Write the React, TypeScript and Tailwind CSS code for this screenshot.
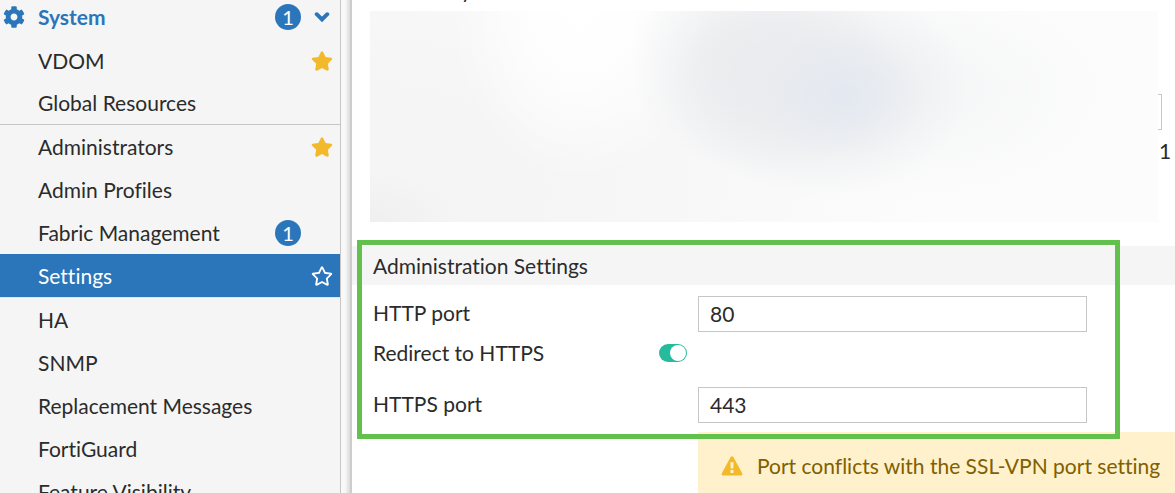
import { useState } from "react";
import { FaCog, FaRegStar, FaStar } from "react-icons/fa";

type NavItem = {
  label: string;
  badge?: number;
  starred?: boolean;
  divider?: boolean;
};

const navItems: NavItem[] = [
  { label: "VDOM", starred: true },
  { label: "Global Resources", divider: true },
  { label: "Administrators", starred: true },
  { label: "Admin Profiles" },
  { label: "Fabric Management", badge: 1 },
  { label: "Settings" },
  { label: "HA" },
  { label: "SNMP" },
  { label: "Replacement Messages" },
  { label: "FortiGuard" },
  { label: "Feature Visibility" },
];

function Badge({ count }: { count: number }) {
  return (
    <span className="flex size-[26px] items-center justify-center rounded-full bg-[#2b75ba] text-xl font-normal text-white">
      {count}
    </span>
  );
}

function ChevronIcon() {
  return (
    <svg viewBox="0 0 16 12" className="mr-[3px] ml-[13px] h-3 w-4" fill="none" stroke="currentColor" strokeWidth="3.9" strokeLinecap="round" strokeLinejoin="miter">
      <path d="M2.7 3.2 L8 8.4 L13.3 3.2" />
    </svg>
  );
}

function WarningIcon() {
  return (
    <svg viewBox="0 0 22 20" className="mr-[14px] h-5 w-[22px] shrink-0">
      <path d="M9.6 1.1 Q11 -0.7 12.4 1.1 L21.3 17.4 Q22 19.4 20.1 19.6 H1.9 Q0 19.4 0.7 17.4 Z" fill="#f2b92b" />
      <path d="M9.4 6.3 H12.6 L12.3 12.6 H9.7 Z M9.5 14 H12.5 V16.9 H9.5 Z" fill="#fef1cb" />
    </svg>
  );
}

function Sidebar() {
  const [active, setActive] = useState("Settings");

  return (
    <nav className="w-[341px] shrink-0 border-r border-[#c6c6c6] bg-[#f5f5f5]">
      <button type="button" className="flex h-[39px] w-full items-center pr-[7px] pb-1.5 pl-[3px] font-bold text-[#2b75ba]">
        <FaCog className="mr-[13px] size-[22px]" />
        <span className="flex-1 text-left">System</span>
        <Badge count={1} />
        <ChevronIcon />
      </button>
      <ul>
        {navItems.map((item) => {
          const isActive = item.label === active;
          return (
            <li key={item.label} className={isActive ? "border-b border-[#dce6f0]" : ""}>
              <a
                href="#"
                onClick={(e) => {
                  e.preventDefault();
                  setActive(item.label);
                }}
                className={`flex h-[43px] items-center pr-[7px] pl-[38px] ${item.divider ? "border-b border-[#c6c6c6]" : ""} ${isActive ? "bg-[#2b75ba] text-white" : "text-[#2b2b2b]"}`}
              >
                <span className="flex-1">{item.label}</span>
                {item.badge && (
                  <span className="mr-8">
                    <Badge count={item.badge} />
                  </span>
                )}
                {item.starred && <FaStar className="size-[22px] text-[#f2b92b]" />}
                {isActive && <FaRegStar className="size-[22px]" />}
              </a>
            </li>
          );
        })}
      </ul>
    </nav>
  );
}

function PortField({ id, label, value, onChange }: { id: string; label: string; value: string; onChange: (v: string) => void }) {
  return (
    <div className="flex items-center">
      <label htmlFor={id} className="w-[325px] shrink-0 pb-0.5">
        {label}
      </label>
      <input
        id={id}
        type="text"
        value={value}
        onChange={(e) => onChange(e.target.value)}
        className="h-9 w-[389px] border border-[#c6c6c6] bg-white px-[11px] pb-0.5 outline-none"
      />
    </div>
  );
}

export default function App() {
  const [httpPort, setHttpPort] = useState("80");
  const [httpsPort, setHttpsPort] = useState("443");
  const [redirect, setRedirect] = useState(true);

  return (
    <div className="flex h-screen overflow-hidden bg-white font-['Lato',sans-serif] text-[21px] leading-7 text-[#2b2b2b] [font-variant-ligatures:none]">
      <Sidebar />
      <div className="w-[11px] shrink-0 border-r-2 border-[#cdcdcd] bg-linear-to-r from-[#f8f8f8] from-45% to-[#dadada]" />

      <main className="min-w-0 flex-1">
        <div className="h-[11px] overflow-hidden pl-[109px]">
          <p className="-mt-6">y</p>
        </div>

        {/* redacted block */}
        <div className="flex pl-[18px]">
          <div className="h-[211px] flex-1 bg-[#fcfcfc] bg-[radial-gradient(ellipse_80px_65px_at_475px_84px,#e3e8f1_0%,#e3e8f188_35%,#e3e8f100_100%),radial-gradient(ellipse_150px_110px_at_450px_76px,#e9ebee_0%,#e9ebeebb_40%,#e9ebee00_100%),radial-gradient(ellipse_130px_110px_at_390px_55px,#e9ebee_0%,#e9ebeebb_40%,#e9ebee00_100%),radial-gradient(ellipse_200px_110px_at_540px_80px,#f4f5f6_0%,#f4f5f600_100%),radial-gradient(ellipse_130px_170px_at_210px_0px,#ffffff_0%,#ffffffcc_40%,#ffffff00_100%),radial-gradient(ellipse_90px_50px_at_0px_211px,#efeff0_0%,#efeff000_100%),radial-gradient(ellipse_560px_340px_at_0px_180px,#f5f5f5_0%,#f5f5f5_30%,#f5f5f500_100%)]" />
          <div className="w-[17px] shrink-0">
            <div className="mt-[83px] h-9 w-1 border-y border-r border-[#c6c6c6]" />
            <p className="mt-[7px] pl-px">1</p>
          </div>
        </div>

        <section className="relative mt-6">
          <h2 className="flex h-[39px] items-center bg-[#f5f5f5] pl-[21px]">Administration Settings</h2>
          <div className="pt-[11px] pl-[21px]">
            <PortField id="http-port" label="HTTP port" value={httpPort} onChange={setHttpPort} />
            <div className="my-[7px] flex items-center">
              <label htmlFor="redirect" className="w-[286px] shrink-0">
                Redirect to HTTPS
              </label>
              <input
                id="redirect"
                type="checkbox"
                role="switch"
                checked={redirect}
                onChange={(e) => setRedirect(e.target.checked)}
                className="flex h-[18px] w-7 appearance-none items-center rounded-full bg-gray-400 px-px before:size-4 before:rounded-full before:bg-white checked:justify-end checked:bg-[#27bb9d]"
              />
            </div>
            <div className="pt-[13px]">
              <PortField id="https-port" label="HTTPS port" value={httpsPort} onChange={setHttpsPort} />
            </div>
            <div className="mt-[9px] ml-[325px] flex h-[68px] items-center bg-[#fef1cb] pl-[23px] whitespace-nowrap text-[#806000]">
              <WarningIcon />
              Port conflicts with the SSL-VPN port setting
            </div>
          </div>

          {/* highlight frame over the port fields */}
          <div className="pointer-events-none absolute -top-1.5 left-[5px] h-[199px] w-[763px] border-5 border-[#62c14c]" />
        </section>
      </main>
    </div>
  );
}
